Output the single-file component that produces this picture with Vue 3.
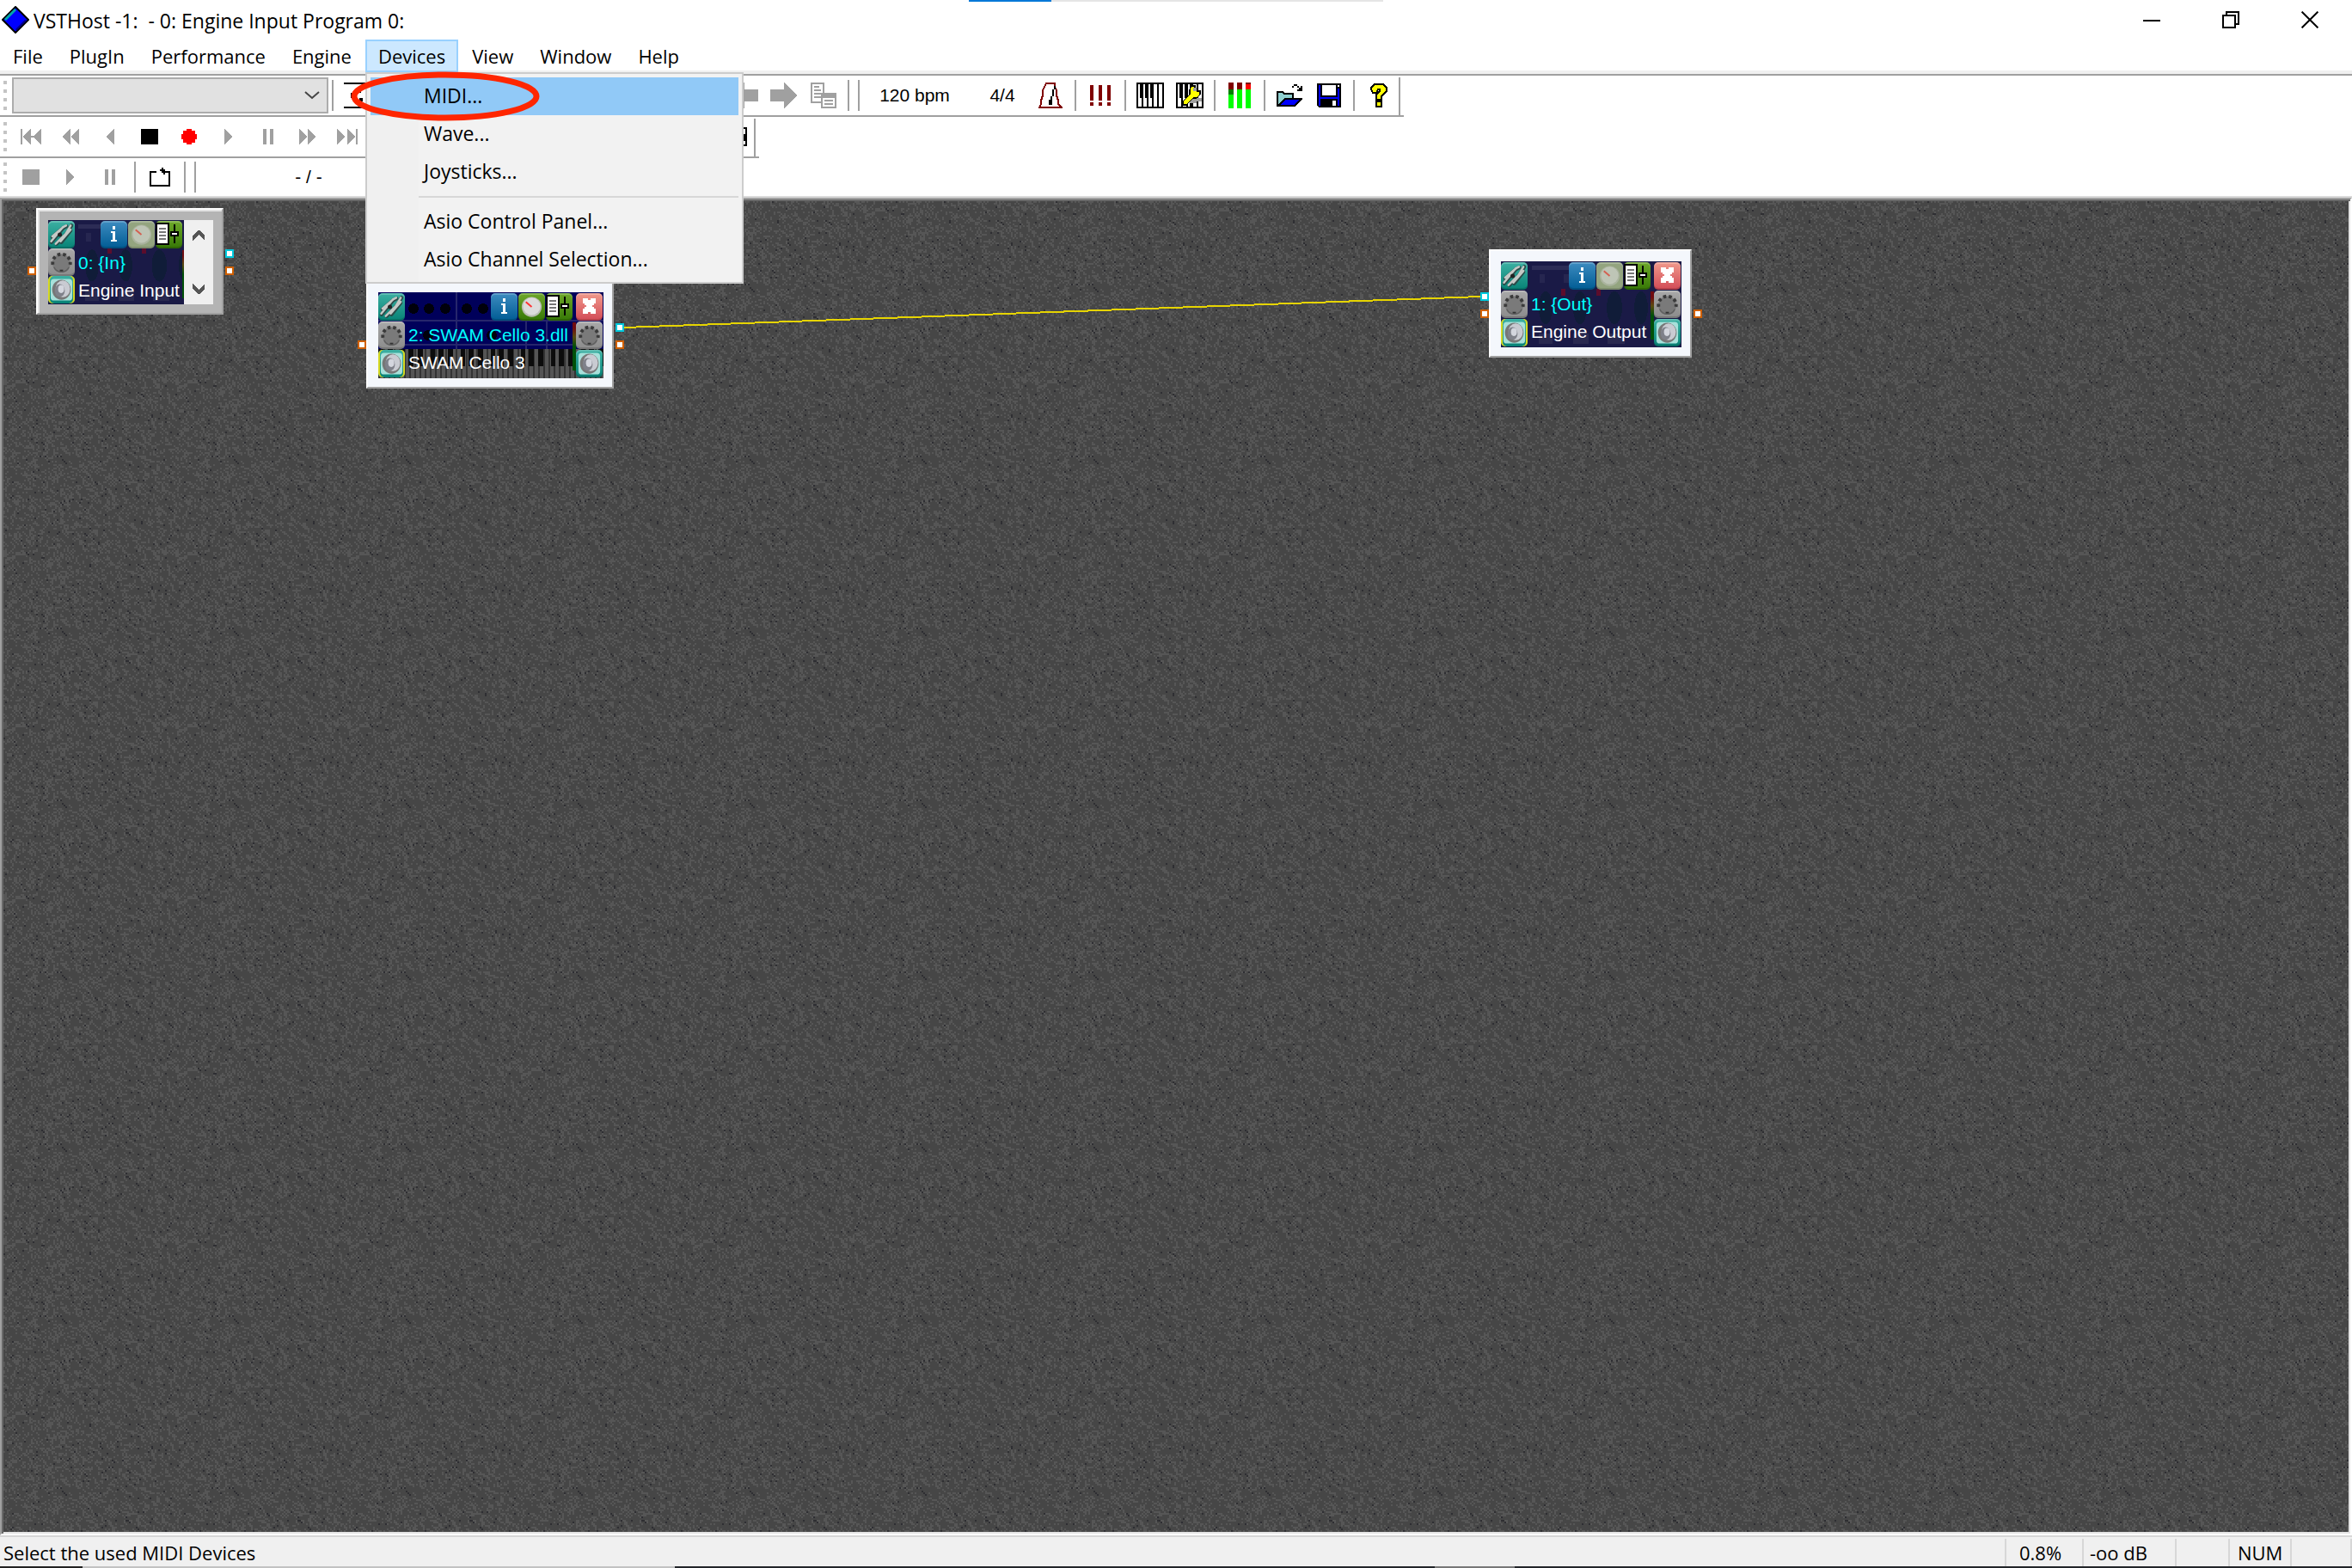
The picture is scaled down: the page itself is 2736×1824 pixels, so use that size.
<script setup>
const menus = ['File', 'PlugIn', 'Performance', 'Engine', 'Devices', 'View', 'Window', 'Help']
const openMenu = 'Devices'
const deviceItems = [
  { label: 'MIDI...', active: true },
  { label: 'Wave...' },
  { label: 'Joysticks...' },
  { divider: true },
  { label: 'Asio Control Panel...' },
  { label: 'Asio Channel Selection...' },
]

// Icon bodies are drawn on a coarse grid where one unit is two screen pixels.
const icons = {
  program: { w: 16, h: 15, body: '<path d="M0 0h16v1H0zM0 14h16v1H0zM6 5h4v1H6zM4 6h2v3H4zM9 9h2v2H9z"/>' },
  prev: { w: 16, h: 15, body: '<path fill="#a0a0a0" d="M8 0v4h8v7H8v4L0 7.500z"/>' },
  next: { w: 16, h: 15, body: '<path fill="#a0a0a0" d="M0 4h8V0l8 7.500L8 15v-4H0z"/>' },
  copy: { w: 15, h: 15, body: '<g fill="none" stroke="#a0a0a0"><path d="M.5 .5h7v11h-7z"/><path d="M2 2.500h3M2 4.500h4M2 6.500h4M2 8.500h4"/><path fill="#fff" d="M6.500 6.500h8v8h-8z"/><path d="M7 8.500h7M8 10.500h5M8 12.500h5"/><path d="M7 7.500h7"/></g>' },
  metronome: { w: 14, h: 15, body: '<path fill="none" stroke="#800000" d="M4.500 .5h5v2l1 2v3l1 3v2l2 2H.5l1-2v-2l1-3v-3l1-2z"/><path d="M9 2h1v2H9zM8 4h1v4H8zM7 8h1v2H7zM6 10h2v3H6z"/>' },
  alarm: { w: 12, h: 12, body: '<path fill="#800000" d="M0 0h2v9H0zM5 0h2v9H5zM10 0h2v9h-2zM0 10h2v2H0zM5 10h2v2H5zM10 10h2v2h-2z"/>' },
  piano: { w: 16, h: 15, body: '<path d="M0 0h16v15H0z"/><path fill="#fff" d="M1 1h1v13H1zM2 9h1v5H2zM4 1h1v13H4zM5 9h1v5H5zM7 1h1v13H7zM8 9h1v5H8zM10 1h2v13h-2zM13 1h1v13h-1zM14 1h1v13h-1z"/>' },
  pianoEdit: { w: 16, h: 15, body: '<path d="M0 0h16v15H0z"/><path fill="#fff" d="M1 1h1v13H1zM2 9h1v5H2zM4 1h1v13H4zM5 9h1v5H5zM7 1h1v13H7zM10 1h2v13h-2zM13 1h2v13h-2z"/><path fill="#a0a0a0" d="M9 9h6v2h-3v1H8z"/><path fill="#ff0" stroke="#000" stroke-width=".6" d="M9 2h2v2l1 1h2v2l-2 2h-2l-4 4H4v-2l4-4V4z"/><path fill="#a0a0a0" d="M10 3h2v2h-2z"/>' },
  levels: { w: 13, h: 15, body: '<path fill="#800000" d="M0 0h3v4H0zM5 0h3v4H5zM10 0h3v1h-3z"/><path fill="red" d="M10 1h3v3h-3z"/><path fill="#008000" d="M0 4h3v3H0z"/><path fill="#0f0" d="M0 7h3v8H0zM5 4h3v11H5zM10 4h3v11h-3z"/>' },
  open: { w: 15, h: 13, body: '<path fill="#8fd0d0" stroke="#000" d="M.5 12.500v-8h3l1 1h5v3"/><path fill="#00f" stroke="#000" d="M1 12.500l4-4h9.500l-4 4z"/><path d="M8 2h1V1h1V0h2v1h1v1h1V1h1v3h-3V3h1V2h-1V1h-2v1z"/>' },
  save: { w: 14, h: 14, body: '<path d="M0 0h14v14H1L0 13z"/><path fill="#00f" d="M1 1h1v12H1zM12 3h1v10h-1zM2 8h10v1H2z"/><path fill="#fff" d="M3 1h8v6H3zM12 1h1v1h-1zM9 10h2v3H9z"/>' },
  help: { w: 10, h: 14, body: '<path fill="#ff0" stroke="#000" d="M.5 3.500v-1l2-2h5l2 2v2l-3 3v2h-3v-3l2-2v-1h-1l-1 2h-2zM3.500 10.500h3v3h-3z"/>' },
  first: { w: 12, h: 9, body: '<path fill="#a0a0a0" d="M0 0h1v9H0zM6 0v9L1 4.500zM12 0v9L7 4.500zM6 4h2v1H6z"/>' },
  rewind: { w: 10, h: 9, body: '<path fill="#a0a0a0" d="M5 0v9L0 4.500zM10 0v9L5 4.500z"/>' },
  back: { w: 5, h: 9, body: '<path fill="#a0a0a0" d="M5 0v9L0 4.500z"/>' },
  stop: { w: 10, h: 9, body: '<path d="M0 0h10v9H0z"/>' },
  record: { w: 9, h: 9, body: '<path fill="red" d="M3 0h3v1h2v2h1v3H8v2H6v1H3V8H1V6H0V3h1V1h2z"/>' },
  play: { w: 5, h: 9, body: '<path fill="#a0a0a0" d="M0 0v9l5-4.500z"/>' },
  pause: { w: 6, h: 9, body: '<path fill="#a0a0a0" d="M0 0h2v9H0zM4 0h2v9H4z"/>' },
  forward: { w: 10, h: 9, body: '<path fill="#a0a0a0" d="M0 0v9l5-4.500zM5 0v9l5-4.500z"/>' },
  last: { w: 12, h: 9, body: '<path fill="#a0a0a0" d="M0 0v9l5-4.500zM6 0v9l5-4.500zM11 0h1v9h-1z"/>' },
  export: { w: 15, h: 11, body: '<path d="M0 0h15v11H0z"/><path fill="#fff" d="M1 1h13v3H1zM12 8h2v2h-2z"/><path fill="#ff0" d="M5 5h8v3H5z"/><path fill="#a0a0a0" d="M11 3h2v2h-2z"/>' },
  stopOff: { w: 10, h: 9, body: '<path fill="#a0a0a0" d="M0 0h10v9H0z"/>' },
  loop: { w: 12, h: 11, body: '<path d="M0 2h4v1H1v7h10V3H9V2h3v9H0zM7 0h1v1h1v3H8V3H7V2H6V1h1z"/>' },
  minimize: { w: 10, h: 10, body: '<path d="M0 5h10v1H0z"/>' },
  restore: { w: 10, h: 10, body: '<path fill="none" stroke="#000" d="M.5 2.500h7v7h-7zM2.500 2.500v-2h7v7h-2"/>' },
  close: { w: 10, h: 10, smooth: true, body: '<path fill="none" stroke="#000" d="M.3 .3l9.400 9.400M9.700 .3L.3 9.700"/>' },
  up: { w: 7, h: 6, body: '<path fill="#555" d="M3 0h1l3 3v3L3.500 2.500 0 6V3z"/>' },
  down: { w: 7, h: 6, body: '<path fill="#555" d="M3 6h1l3-3V0L3.500 3.500 0 0v3z"/>' },
  chain: { w: 16, h: 16, smooth: true, body: '<g fill="none" stroke-linecap="round"><path stroke="#2b4a48" stroke-width="2.200" d="M2 12.500l7-8.500 2-1M5 13.500l6-6 3-5M2.500 9.500L9 4M8 12.500L13.500 5.500"/><path stroke="#c4c9c6" stroke-width="1.300" d="M1.800 12l7-8.500 2-1M4.500 13.500l6-6 3-5M2.500 9L9 3.500M7.500 12L13.500 5"/></g><circle cx="7" cy="8" r="1.300" fill="#222"/>' },
  midi: { w: 16, h: 16, smooth: true, body: '<circle cx="8" cy="8.500" r="5.500" fill="#7a7a7a"/><path fill="none" stroke="#3a3a3a" stroke-width="2" stroke-dasharray="1.800 1.600" d="M2.800 9.500a5.300 5.300 0 1 1 10.400 0"/><path fill="#333" d="M7 12.500h2V14H7z"/><path fill="none" stroke="#606060" stroke-width=".8" d="M3.500 11a5 5 0 0 0 9 0"/>' },
  speaker: { w: 16, h: 16, smooth: true, body: '<rect x="1.500" y="1.500" width="13" height="13" rx="2" fill="#a8e0da"/><ellipse cx="8" cy="8" rx="5.600" ry="6" fill="#777"/><ellipse cx="8.800" cy="7.500" rx="4.400" ry="5" fill="#c9cbd2"/><ellipse cx="7" cy="8.500" rx="3" ry="3.800" fill="#7f818a"/><ellipse cx="7.800" cy="7.600" rx="1.800" ry="2.400" fill="#d4d6de"/>' },
  info: { w: 16, h: 16, body: '<path fill="#fff" d="M7 3h2v2H7zM6 6h3v5h1v1H6v-1h1V7H6z"/>' },
  dial: { w: 16, h: 16, smooth: true, body: '<circle cx="8" cy="8" r="6" fill="#b9bdb2"/><circle cx="8" cy="7.700" r="5.200" fill="#dcdcdc"/><path stroke="#f33" d="M4.500 5l3.500 3"/>' },
  mixer: { w: 16, h: 16, body: '<path d="M0 1h8v13H0z"/><path fill="#fff" d="M1 2h6v11H1z"/><path fill="#777" d="M2 4h4v1H2zM2 6h4v1H2zM2 8h4v1H2zM2 10h4v1H2z"/><path d="M11 2h1v11h-1zM9 6h5v3H9z"/><path fill="#fff" d="M10 7h3v1h-3z"/>' },
  unload: { w: 16, h: 16, body: '<path fill="#fff" d="M4 3h3v1h2V3h3v3h-1v1h-1v1h1v1h1v3H9v-1H7v1H4V9h1V8h1V7H5V6H4z"/>' },
}

const transport = ['first', 'rewind', 'back', 'stop', 'record', 'play', 'pause', 'forward', 'last']
const windowButtons = ['minimize', 'restore', 'close']
const statusPanes = [
  { text: '0.8%', cls: 'cpu' },
  { text: '-oo dB', cls: 'level' },
  { text: '', cls: 'caps' },
  { text: 'NUM', cls: 'num' },
  { text: '', cls: 'scroll' },
]

const nodes = [
  { id: 'in', title: '0: {In}', program: 'Engine Input', skin: 'rack', dialOff: true, scroll: true },
  { id: 'plug', title: '2: SWAM Cello 3.dll', program: 'SWAM Cello 3', skin: 'keys' },
  { id: 'out', title: '1: {Out}', program: 'Engine Output', skin: 'rack', dialOff: true },
]

// Repeating stone grain: a 100 x 100 grid of seeded noise smeared along the diagonal.
const size = 100
let seed = 4711
const random = () => {
  seed = (seed * 1103515245 + 12345) % 2147483648
  return seed / 2147483648
}
const noise = Array.from({ length: size * size }, random)
const at = (x, y) => noise[((y + size) % size) * size + ((x + size) % size)]
let lightGrain = ''
let darkGrain = ''
for (let y = 0; y < size; y++) {
  for (let x = 0; x < size; x++) {
    const v = at(x, y) + 0.45 * at(x + 1, y + 1)
    const cell = `M${x * 2} ${y * 2}h2v2h-2z`
    if (v > 0.92) lightGrain += cell
    else if (v < 0.12) darkGrain += cell
  }
}
</script>

<template>
  <div class="host">
    <header class="titlebar">
      <div class="progress"><i></i></div>
      <svg class="logo" viewBox="0 0 32 32"><path d="M16 1l15 15-15 15L1 16z" fill="#00f" stroke="#000" stroke-width="2" /><path d="M3 15L15 3l2 2L5 17z" fill="#0aa" /><path d="M17 29l12-12-2-1-11 11z" fill="#008" /></svg>
      <h1>VSTHost -1:&nbsp; - 0: Engine Input Program 0:</h1>
      <button v-for="b in windowButtons" :key="b" class="winbtn" :aria-label="b">
        <svg :width="icons[b].w * 2" :height="icons[b].h * 2" :viewBox="`0 0 ${icons[b].w} ${icons[b].h}`" :class="{ smooth: icons[b].smooth }" v-html="icons[b].body"></svg>
      </button>
    </header>

    <nav class="menubar">
      <div v-for="m in menus" :key="m" class="menu">
        <button class="menubtn" :class="{ open: m === openMenu }">{{ m }}</button>
        <div v-if="m === openMenu" class="dropdown">
          <template v-for="(item, i) in deviceItems" :key="i">
            <hr v-if="item.divider" />
            <button v-else class="item" :class="{ active: item.active }">{{ item.label }}</button>
          </template>
          <svg class="marker" width="220" height="60" viewBox="0 0 220 60"><ellipse cx="110" cy="30" rx="106" ry="25" fill="none" stroke="#ff2600" stroke-width="7" /></svg>
        </div>
      </div>
    </nav>

    <div class="bars">
      <div class="bar short main">
        <span class="grip"></span>
        <select class="combo" aria-label="Program" disabled><option></option></select>
        <span class="rule"></span>
        <button class="tool" aria-label="Program list"><svg width="32" height="30" viewBox="0 0 16 15" v-html="icons.program.body"></svg></button>
        <div class="covered"></div>
        <button v-for="b in ['prev', 'next', 'copy']" :key="b" class="tool" :aria-label="b">
          <svg :width="icons[b].w * 2" :height="icons[b].h * 2" :viewBox="`0 0 ${icons[b].w} ${icons[b].h}`" v-html="icons[b].body"></svg>
        </button>
        <span class="rule"></span><span class="rule"></span>
        <button class="tool tempo">120 bpm</button>
        <button class="tool meter">4/4</button>
        <template v-for="(group, g) in [['metronome'], ['alarm'], ['piano', 'pianoEdit'], ['levels'], ['open', 'save'], ['help']]" :key="g">
          <span v-if="g" class="rule"></span>
          <button v-for="b in group" :key="b" class="tool" :aria-label="b">
            <svg :width="icons[b].w * 2" :height="icons[b].h * 2" :viewBox="`0 0 ${icons[b].w} ${icons[b].h}`" v-html="icons[b].body"></svg>
          </button>
        </template>
      </div>

      <div class="bar short wave">
        <span class="grip"></span>
        <button v-for="b in transport" :key="b" class="tool" :aria-label="b">
          <svg :width="icons[b].w * 2" :height="icons[b].h * 2" :viewBox="`0 0 ${icons[b].w} ${icons[b].h}`" v-html="icons[b].body"></svg>
        </button>
        <div class="covered"></div>
        <button class="tool" aria-label="export"><svg width="30" height="22" viewBox="0 0 15 11" v-html="icons.export.body"></svg></button>
      </div>

      <div class="bar player">
        <span class="grip"></span>
        <button v-for="b in ['stopOff', 'play', 'pause']" :key="b" class="tool" :aria-label="b">
          <svg :width="icons[b].w * 2" :height="icons[b].h * 2" :viewBox="`0 0 ${icons[b].w} ${icons[b].h}`" v-html="icons[b].body"></svg>
        </button>
        <span class="rule"></span>
        <button class="tool" aria-label="loop"><svg width="24" height="22" viewBox="0 0 12 11" v-html="icons.loop.body"></svg></button>
        <span class="rule"></span><span class="rule"></span>
        <span class="position">- / -</span>
      </div>
    </div>

    <main class="workspace">
      <svg class="grain" width="100%" height="100%">
        <defs>
          <pattern id="stone" width="200" height="200" patternUnits="userSpaceOnUse">
            <rect width="200" height="200" fill="#464646" />
            <path :d="lightGrain" fill="#565656" />
            <path :d="darkGrain" fill="#2e2e32" />
          </pattern>
        </defs>
        <rect width="100%" height="100%" fill="url(#stone)" />
        <path d="M722 147L1718 111" stroke="#e6d400" stroke-width="2" />
      </svg>

      <section v-for="n in nodes" :key="n.id" class="node" :class="[n.id, n.skin]">
        <i class="port audio left"></i>
        <i v-if="n.id === 'out'" class="port midi left"></i>
        <i v-else class="port midi right"></i>
        <i class="port audio right"></i>
        <div class="panel">
          <svg v-if="n.skin === 'rack'" class="skin" viewBox="0 0 210 100" preserveAspectRatio="xMinYMin slice">
            <rect width="210" height="100" fill="#1a1a46" />
            <rect x="36" y="5" width="100" height="5" fill="#2c2c55" />
            <path d="M45 15h6v10h-6zM73 15h6v10h-6z" fill="#262650" />
            <g fill="#101c38"><ellipse cx="52" cy="54" rx="8" ry="19" /><ellipse cx="92" cy="54" rx="8" ry="19" /><ellipse cx="132" cy="54" rx="9" ry="19" /><ellipse cx="163" cy="54" rx="8" ry="19" /></g>
            <path d="M70 32h5v8h-5zM111 32h5v8h-5z" fill="#5c0d2c" />
            <path d="M44 84h16v12H44zM84 84h18v12H84zM124 84h20v12h-20z" fill="#29294f" />
          </svg>
          <svg v-else class="skin" viewBox="0 0 262 100" preserveAspectRatio="none">
            <rect width="262" height="66" fill="#00005a" />
            <path d="M0 33h262M91 0v66M172 33v33M196 33v33M0 61h230" stroke="#26266c" stroke-width="2" />
            <g fill="#00000c"><circle cx="41" cy="19" r="6" /><circle cx="59" cy="19" r="6" /><circle cx="78" cy="19" r="6" /><circle cx="103" cy="19" r="6" /><circle cx="122" cy="19" r="6" /><circle cx="58" cy="50" r="6" /><circle cx="132" cy="50" r="6" /></g>
            <rect y="66" width="262" height="34" fill="#555" />
            <path d="M0 83h262" stroke="#333" stroke-width="34" stroke-dasharray="2 4" />
            <path d="M0 76h262" stroke="#0c0c0c" stroke-width="20" stroke-dasharray="6 5 6 9 5 4" />
          </svg>
          <div class="side">
            <button class="chip teal" aria-label="Chain"><svg viewBox="0 0 16 16" class="smooth" v-html="icons.chain.body"></svg></button>
            <button class="chip grey" aria-label="MIDI input"><svg viewBox="0 0 16 16" class="smooth" v-html="icons.midi.body"></svg></button>
            <button class="chip teal lit" aria-label="Audio input"><svg viewBox="0 0 16 16" class="smooth" v-html="icons.speaker.body"></svg></button>
          </div>
          <div class="center">
            <div class="chips">
              <button class="chip blue" aria-label="Info"><svg viewBox="0 0 16 16" v-html="icons.info.body"></svg></button>
              <button class="chip green" :class="{ off: n.dialOff }" aria-label="Parameters"><svg viewBox="0 0 16 16" class="smooth" v-html="icons.dial.body"></svg></button>
              <button class="chip green" aria-label="Programs"><svg viewBox="0 0 16 16" v-html="icons.mixer.body"></svg></button>
            </div>
            <span class="name">{{ n.title }}</span>
            <span class="program">{{ n.program }}</span>
          </div>
          <i class="vu" :class="{ thin: n.scroll }"></i>
          <div v-if="n.scroll" class="scroller">
            <button aria-label="Scroll up"><svg width="14" height="12" viewBox="0 0 7 6" v-html="icons.up.body"></svg></button>
            <button aria-label="Scroll down"><svg width="14" height="12" viewBox="0 0 7 6" v-html="icons.down.body"></svg></button>
          </div>
          <div v-else class="side">
            <button class="chip red" aria-label="Unload"><svg viewBox="0 0 16 16" v-html="icons.unload.body"></svg></button>
            <button class="chip grey" aria-label="MIDI output"><svg viewBox="0 0 16 16" class="smooth" v-html="icons.midi.body"></svg></button>
            <button class="chip teal" aria-label="Audio output"><svg viewBox="0 0 16 16" class="smooth" v-html="icons.speaker.body"></svg></button>
          </div>
        </div>
      </section>
    </main>

    <footer class="status">
      <span class="hint">Select the used MIDI Devices</span>
      <span v-for="p in statusPanes" :key="p.cls" class="pane" :class="p.cls">{{ p.text }}</span>
    </footer>
    <div class="edge"></div>
  </div>
</template>

<style>
body { background: #fff; }
</style>

<style scoped>
.host { display: flex; flex-direction: column; min-height: 100vh; background: #fff; color: #000; font: 22px/30px "Open Sans", "Noto Sans", sans-serif; }
.host * { box-sizing: border-box; }
button { margin: 0; padding: 0; border: 0; background: none; color: inherit; font: inherit; }
svg { display: block; shape-rendering: crispEdges; }
svg.smooth { shape-rendering: auto; }

.titlebar { position: relative; display: flex; align-items: center; height: 46px; padding: 0 3px 0 2px; }
.titlebar h1 { flex: 1; margin: 2px 0 0 5px; font-size: 23px; font-weight: 400; }
.logo { width: 32px; height: 32px; shape-rendering: auto; }
.winbtn { display: flex; align-items: center; justify-content: center; width: 92px; height: 44px; }
.progress { position: absolute; top: 0; left: 50%; width: 482px; height: 2px; margin-left: -241px; background: #e5e5e5; }
.progress i { display: block; width: 20%; height: 100%; background: #0078d7; }

.menubar { display: flex; align-items: flex-start; gap: 1px; height: 40px; border-bottom: 4px solid #f0f0f0; }
.menu { position: relative; }
.menubtn { display: block; height: 38px; padding: 0 13px; border: 2px solid transparent; line-height: 32px; }
.menubtn.open { border-color: #99d1ff; background: #cce8ff; }
.dropdown { position: absolute; z-index: 5; top: 38px; left: 0; width: 440px; padding: 4px; border: 2px solid #ccc; background: linear-gradient(90deg, #f0f0f0 60px, #f2f2f2 60px); font-size: 23px; }
.item { display: block; width: 100%; height: 44px; padding: 0 0 2px 62px; text-align: left; line-height: 42px; }
.item.active { background: #91c9f7; }
.dropdown hr { height: 2px; margin: 6px 0 6px 56px; border: 0; background: #d7d7d7; }
.marker { position: absolute; top: -4px; left: -19px; shape-rendering: auto; }

.bars { border-top: 2px solid #a0a0a0; }
.bar { display: flex; align-items: center; height: 48px; border-bottom: 2px solid #a0a0a0; }
.bar.short { width: max-content; }
.bar.short::after { content: ""; width: 4px; height: 44px; margin-top: 2px; border-left: 2px solid #a0a0a0; }
.bar.player { height: 46px; border-bottom-color: #dadada; }
.grip { width: 9px; height: 34px; margin-left: 4px; background: repeating-linear-gradient(#c4c4c4 0 4px, #fff 4px 10px); background-size: 4px 100%; background-repeat: no-repeat; }
.combo { width: 368px; height: 42px; margin: 0 -1px 0 1px; border: 2px solid #acacac; border-radius: 0; appearance: none; opacity: 1; background: #e1e1e1 url("data:image/svg+xml,%3Csvg xmlns='http://www.w3.org/2000/svg' width='18' height='10'%3E%3Cpath d='M1 1l8 7 8-7' fill='none' stroke='%23444' stroke-width='2'/%3E%3C/svg%3E") no-repeat right 8px center; }
.rule { width: 2px; height: 36px; margin: 0 5px; background: #a0a0a0; }
.tool { display: flex; align-items: center; justify-content: center; width: 46px; height: 42px; }
.tempo, .meter, .position { font: 21px/30px "Liberation Sans", Arial, sans-serif; }
.tempo { width: 118px; margin-right: 10px; }
.meter { width: 66px; }
.position { width: 252px; text-align: center; }
.covered { width: 404px; }

.workspace { position: relative; flex: 1; overflow: hidden; border: 2px solid; border-color: #a0a0a0 #fff #fff #a0a0a0; box-shadow: inset 2px 2px #696969, inset -2px -2px #e3e3e3; }
.grain { position: absolute; inset: 2px; width: calc(100% - 4px); height: calc(100% - 4px); }
.node { position: absolute; padding: 12px 10px 10px 12px; border: 2px solid; border-color: #fff #a0a0a0 #a0a0a0 #fff; background: #f4f7fc; }
.node.in { left: 40px; top: 10px; background: #b4b4b4; box-shadow: inset 2px 2px #e3e3e3; }
.node.plug { left: 424px; top: 94px; }
.node.out { left: 1730px; top: 58px; }
.port { position: absolute; top: 68px; width: 10px; height: 10px; border: 2px solid #d06000; background: #fff; }
.port.midi { top: 48px; border-color: #00c8dc; }
.port.left { left: -12px; }
.port.right { right: -14px; }
.node.in .port { margin-top: -2px; }
.panel { position: relative; display: flex; height: 100px; overflow: hidden; }
.node.in .panel { height: 98px; }
.skin { position: absolute; left: 0; top: 0; width: 100%; height: 100%; }
.side, .center, .scroller, .vu { position: relative; }
.side { display: flex; flex-direction: column; justify-content: space-between; width: 32px; padding: 1px 0; }
.chip { width: 31px; height: 32px; border-radius: 5px; box-shadow: inset 0 -2px rgba(0, 0, 0, .15), inset 0 2px rgba(255, 255, 255, .2); }
.chip svg { width: 31px; height: 32px; }
.teal { background: linear-gradient(#3cb0a2, #078276); }
.grey { background: linear-gradient(#a8a8a8, #8c8c8c); }
.blue { background: linear-gradient(#3d8cc0, #005c94); }
.green { background: linear-gradient(#6ea82a, #367806); }
.green.off { background: #93a47f; }
.green.off svg { opacity: .6; }
.red { background: linear-gradient(#f09a8c, #d24a56); }
.lit { box-shadow: inset 2px 0 #d8d820, inset -2px 0 #d8d820; }
.center { display: flex; flex: none; flex-direction: column; font: 21px/32px "Liberation Sans", Arial, sans-serif; white-space: nowrap; }
.in .center { width: 124px; }
.out .center { width: 142px; }
.plug .center { width: 194px; }
.chips { display: flex; justify-content: flex-end; gap: 1px; height: 34px; padding-top: 1px; }
.name, .program { height: 32px; padding-left: 3px; }
.name { color: #00ffff; }
.program { color: #fff; }
.vu { width: 4px; height: 56px; margin-top: 35px; background: linear-gradient(#700c10 12%, #5a4a10 30%, #005008 50%); }
.vu.thin { width: 2px; }
.scroller { display: flex; flex-direction: column; justify-content: space-between; align-items: center; width: 34px; padding: 8px 0; background: #f0f0f0; }
.scroller button { width: 20px; height: 20px; display: flex; align-items: center; justify-content: center; }

.status { display: flex; height: 36px; background: #f0f0f0; border-top: 2px solid #d7d7d7; line-height: 36px; }
.hint { flex: 1; padding-left: 4px; }
.pane { height: 32px; margin-top: 2px; border-left: 2px solid #d7d7d7; line-height: 32px; }
.cpu { width: 90px; padding-left: 15px; }
.level { width: 108px; padding-left: 7px; }
.caps { width: 62px; }
.num { width: 72px; padding-left: 9px; }
.scroll { width: 72px; border-right: 2px solid #d7d7d7; }
.edge { height: 2px; background: linear-gradient(90deg, #222 3.5%, #c2c2c2 3.5% 28.7%, #222529 28.7% 61%, #777 61% 64.4%, #222529 64.4%); }
</style>
